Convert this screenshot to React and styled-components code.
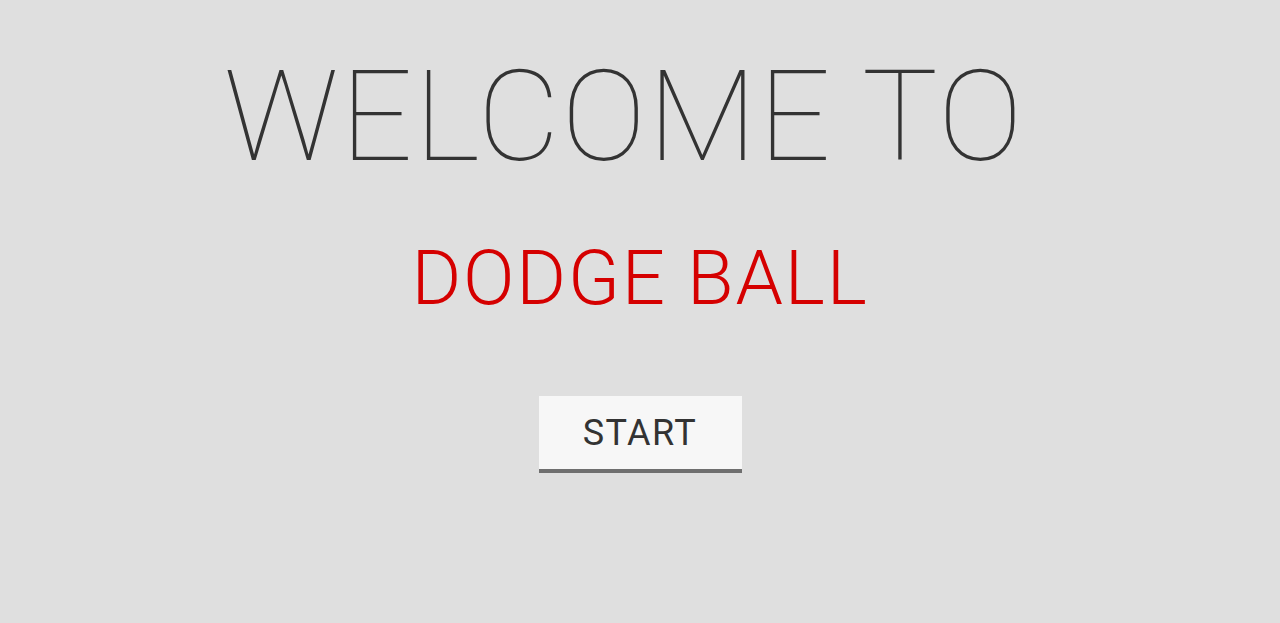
import React from "react"
import styled, { createGlobalStyle } from "styled-components"

const GlobalStyle = createGlobalStyle`
    html, body {
        margin: 0;
        padding: 0;
        background: #dfdfdf;
        font-family: Roboto, "Liberation Sans", sans-serif;
    }
`

const Screen = styled.div`
    width: 100%;
    height: 623px;
    display: flex;
    flex-direction: column;
    align-items: center;
    background: #dfdfdf;
`

const Welcome = styled.h1`
    margin: 42px 0 0;
    font-size: 127px;
    font-weight: 100;
    line-height: 150px;
    letter-spacing: 1.7px;
    color: #333;
    white-space: pre;
`

const Title = styled.h2`
    margin: 41px 0 0;
    font-size: 76px;
    font-weight: 300;
    line-height: 90px;
    letter-spacing: 1.8px;
    color: #d50000;
`

const StartButton = styled.button`
    margin-top: 73px;
    width: 203px;
    height: 77px;
    border: none;
    border-bottom: 4px solid #6f6f6f;
    background: #f7f7f7;
    color: #333;
    font-family: Roboto, "Liberation Sans", sans-serif;
    font-size: 36px;
    font-weight: 400;
    letter-spacing: 1.5px;
    cursor: pointer;
`

export default function App() {
    return (
        <Screen>
            <GlobalStyle />
            <Welcome>{"WELCOME TO "}</Welcome>
            <Title>DODGE BALL</Title>
            <StartButton>START</StartButton>
        </Screen>
    )
}
